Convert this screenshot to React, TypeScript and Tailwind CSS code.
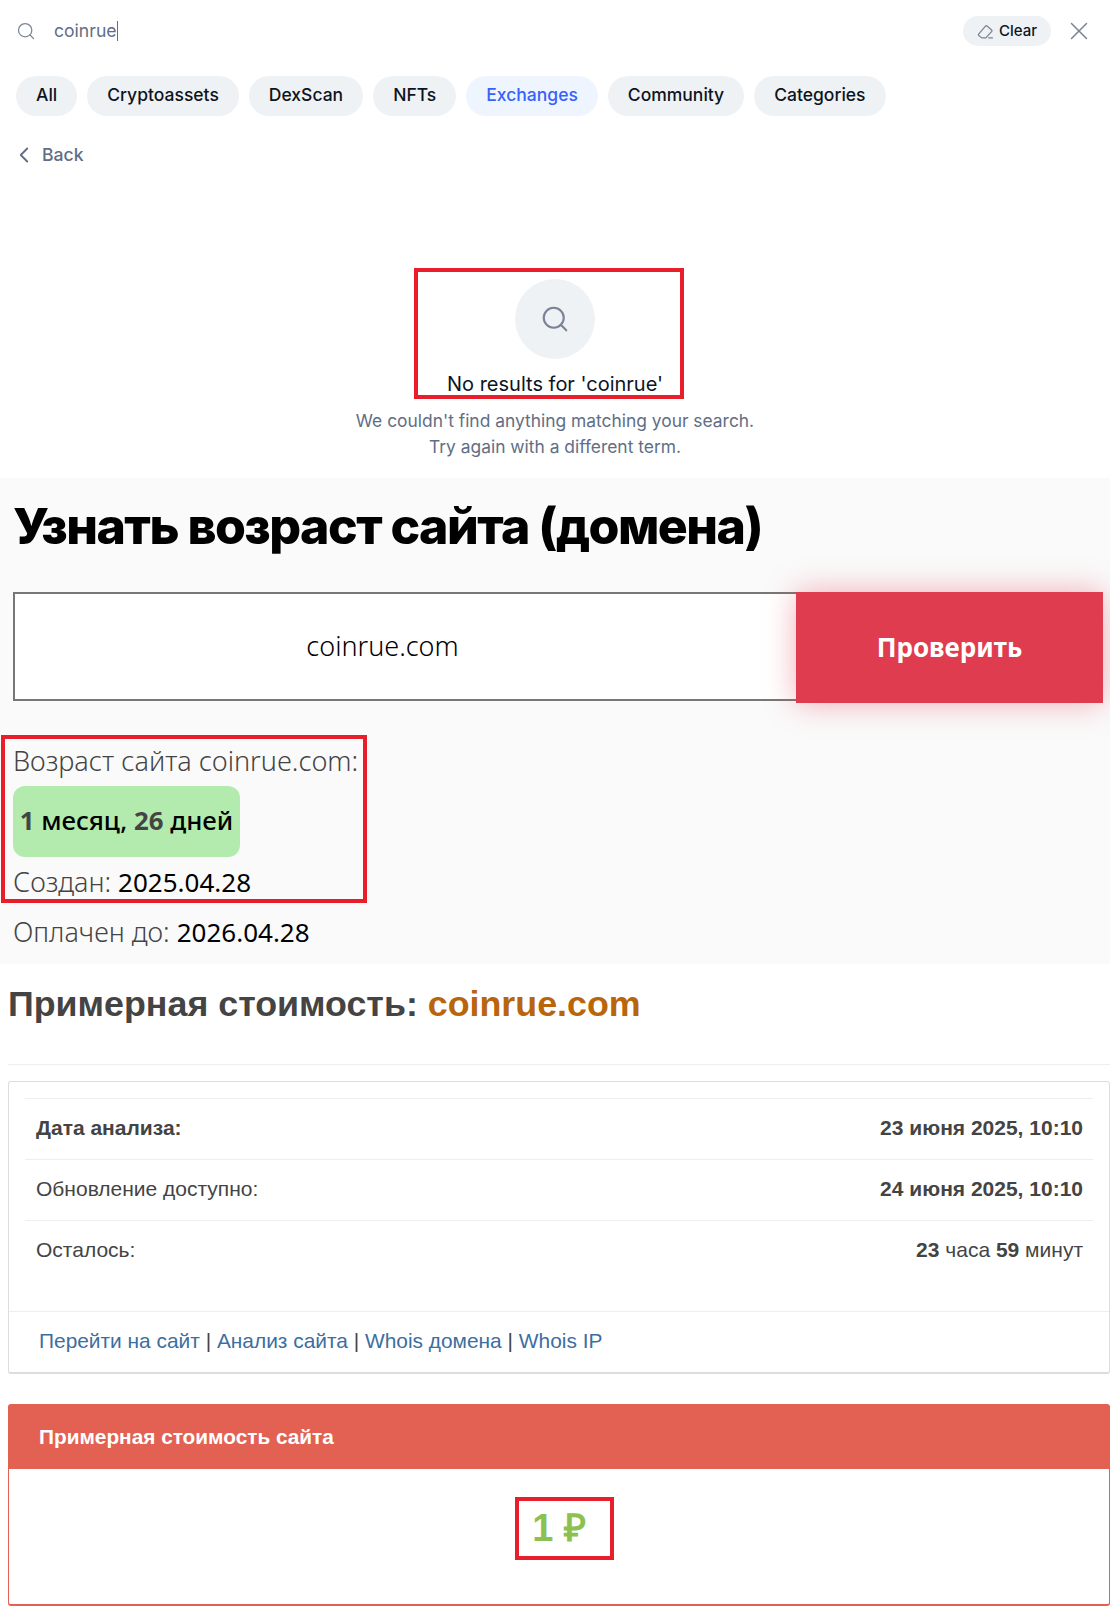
import React from 'react';
import { Search, X, ChevronLeft } from 'lucide-react';

const tabs = ['All', 'Cryptoassets', 'DexScan', 'NFTs', 'Exchanges', 'Community', 'Categories'];

const Mark: React.FC<{ className: string }> = ({ className }) => (
  <div className={`absolute border-[4px] border-[#e81f2a] pointer-events-none ${className}`} />
);

const ClearIcon = () => (
  <svg width="17" height="17" viewBox="0 0 16 16" fill="none" stroke="#7a8496" strokeWidth="1.2" strokeLinejoin="round" strokeLinecap="round">
    <path d="M1.5 10.5 L8 3 a1 1 0 0 1 1.4 -0.1 L13.8 6.5 a1 1 0 0 1 0.1 1.4 L8.3 14 H4.5 L1.7 11.7 a0.8 0.8 0 0 1 -0.2 -1.2 z" />
    <path d="M11 14 h3.5" />
  </svg>
);

const SearchPanel = () => (
  <div className="relative h-[478px] bg-white font-['Inter',sans-serif]">
    {/* Search bar */}
    <div className="flex items-center h-[62px] pl-[16px] pr-[16px]">
      <Search size={20} strokeWidth={1.5} className="text-[#7a8496]" />
      <span className="ml-[18px] text-[17.6px] text-[#616e85]">coinrue</span>
      <span className="w-px h-[20px] bg-[#616e85]" />
      <div className="ml-auto flex items-center gap-[5px] h-[30px] px-[14px] rounded-full bg-[#eff2f5]">
        <ClearIcon />
        <span className="text-[15px] font-medium text-[#0d1421]">Clear</span>
      </div>
      <X size={30} strokeWidth={1.2} className="ml-[13px] text-[#7a8496]" />
    </div>

    {/* Tabs */}
    <div className="flex gap-[10px] pl-[16px] mt-[14px]">
      {tabs.map((t) => (
        <div
          key={t}
          className={
            t === 'Exchanges'
              ? 'h-[40px] px-[20px] pb-[1px] flex items-center rounded-full bg-[#eff5ff] text-[#3861fb] text-[17.5px] font-medium'
              : 'h-[40px] px-[20px] pb-[1px] flex items-center rounded-full bg-[#eff2f5] text-[#0d1421] text-[17.5px] font-medium'
          }
        >
          {t}
        </div>
      ))}
    </div>

    {/* Back */}
    <div className="flex items-center mt-[27px] pl-[11px] h-[24px] text-[#616e85]">
      <ChevronLeft size={26} strokeWidth={1.7} />
      <span className="ml-[5px] text-[17.6px] font-medium">Back</span>
    </div>

    {/* Empty state */}
    <div className="flex flex-col items-center mt-[112px]">
      <div className="w-[80px] h-[80px] rounded-full bg-[#eff2f5] flex items-center justify-center">
        <Search size={30} strokeWidth={1.7} className="text-[#7a8496]" />
      </div>
      <p className="mt-[12px] text-[20px] leading-[26px] text-[#0d1421]">No results for 'coinrue'</p>
      <p className="mt-[11px] text-[17.4px] leading-[26px] text-[#616e85] text-center">
        We couldn't find anything matching your search.
        <br />
        Try again with a different term.
      </p>
    </div>
    <Mark className="left-[414px] top-[268px] w-[270px] h-[131px]" />
  </div>
);

const AgePanel = () => (
  <div className="relative h-[486px] bg-[#fafafa] pl-[13px] pr-[7px] font-['Noto_Sans',sans-serif]">
    <h1 className="pt-[14px] text-[50px] leading-[68px] font-extrabold tracking-[-1.55px] text-black font-['Inter',sans-serif]">
      Узнать возраст сайта (домена)
    </h1>
    <div className="flex mt-[32px] items-start">
      <div className="flex-1 h-[109px] bg-white border-2 border-[#777777] border-r-0 flex items-center justify-center pr-[46px] text-[27px] font-light text-black">
        coinrue.com
      </div>
      <div className="w-[307px] h-[111px] bg-[#e03c50] shadow-[0_0_30px_rgba(224,60,80,0.4)] flex items-center justify-center text-[26px] font-bold text-white">
        Проверить
      </div>
    </div>
    <p className="mt-[38px] text-[27.1px] leading-[40px] font-light text-[#444444]">Возраст сайта coinrue.com:</p>
    <div className="mt-[5px] w-[227px] h-[71px] pb-[3px] rounded-[12px] bg-[#b2ebad] flex items-center justify-center text-[25.8px] font-medium text-black whitespace-nowrap">
      <b className="text-[#444444] font-bold">1</b>&nbsp;месяц,&nbsp;<b className="text-[#444444] font-bold">26</b>&nbsp;дней
    </div>
    <p className="mt-[5px] text-[27px] leading-[40px] font-light text-[#444444]">
      Создан: <span className="text-[26px] font-normal text-black">2025.04.28</span>
    </p>
    <p className="mt-[10px] text-[27px] leading-[40px] font-light text-[#444444]">
      Оплачен до: <span className="text-[26px] font-normal text-black">2026.04.28</span>
    </p>
    <Mark className="left-[1px] top-[257px] w-[366px] h-[168px]" />
  </div>
);

const Row: React.FC<{ label: React.ReactNode; children: React.ReactNode; height: string }> = ({ label, children, height }) => (
  <div className={`flex items-center justify-between border-t border-[#eeeeee] pl-[11px] pr-[10px] pb-[2px] ${height}`}>
    <span>{label}</span>
    <span>{children}</span>
  </div>
);

const ValuePanel = () => (
  <div className="bg-white pl-[8px] font-['Liberation_Sans',sans-serif] text-[#444444]">
    <h2 className="pt-[20px] text-[35.8px] leading-[40px] font-bold">
      Примерная стоимость: <span className="text-[#b8650c]">coinrue.com</span>
    </h2>
    <div className="mt-[40px] border-t border-[#eeeeee]" />

    <div className="mt-[16px] h-[293px] bg-white border border-[#dddddd] border-b-2 rounded-[3px] text-[21px]">
      <div className="pt-[16px] px-[16px]">
        <Row label={<b>Дата анализа:</b>} height="h-[61px]"><b>23 июня 2025, 10:10</b></Row>
        <Row label="Обновление доступно:" height="h-[61px]"><b>24 июня 2025, 10:10</b></Row>
        <Row label="Осталось:" height="h-[60px]"><b>23</b> часа <b>59</b> минут</Row>
      </div>
      <div className="mt-[31px] border-t border-[#eeeeee] pl-[30px] pb-[2px] h-[60px] flex items-center text-[20.9px] text-[#444444]">
        <span className="text-[#3c6e9f]">Перейти на сайт</span>&nbsp;|&nbsp;
        <span className="text-[#3c6e9f]">Анализ сайта</span>&nbsp;|&nbsp;
        <span className="text-[#3c6e9f]">Whois домена</span>&nbsp;|&nbsp;
        <span className="text-[#3c6e9f]">Whois IP</span>
      </div>
    </div>

    <div className="relative mt-[30px] h-[202px] border border-[#e36152] border-b-2 rounded-[3px]">
      <div className="h-[64px] bg-[#e36152] flex items-center pl-[30px] text-[20.8px] font-bold text-white">
        Примерная стоимость сайта
      </div>
      <div className="flex justify-center pt-[34px] text-[38px] leading-[50px] font-bold text-[#8cc152]">
        1 ₽
      </div>
    </div>
    <Mark className="left-[515px] top-[1497px] w-[99px] h-[63px]" />
  </div>
);

export default function App() {
  return (
    <div className="relative w-[1110px] h-[1611px] overflow-hidden bg-white">
      <SearchPanel />
      <AgePanel />
      <ValuePanel />
    </div>
  );
}
